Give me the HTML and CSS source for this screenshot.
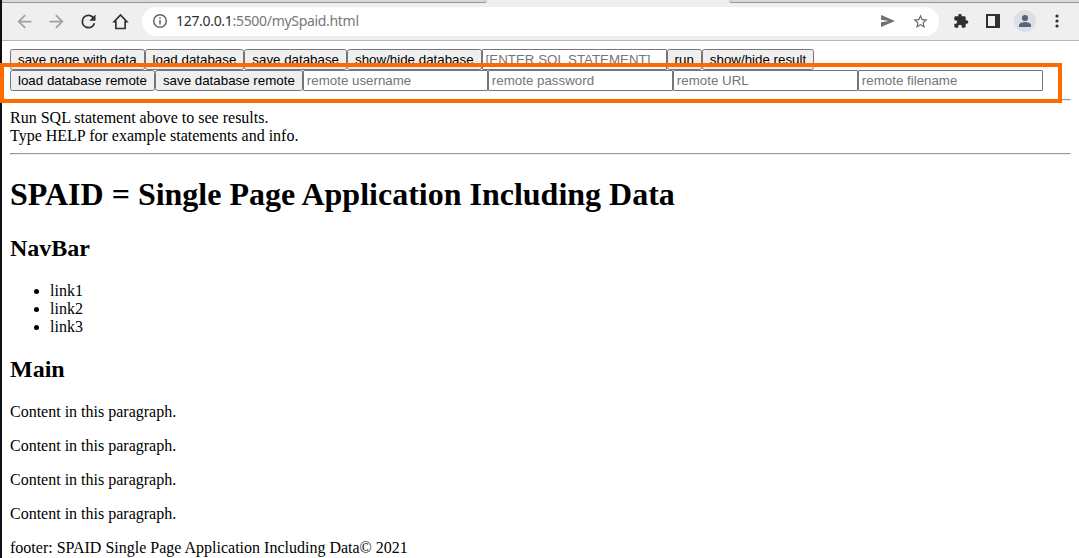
FILE: index.html
```html
<!DOCTYPE html>
<html lang="en">
<head>
<meta charset="utf-8">
<title>mySpaid</title>
<link rel="stylesheet" href="styles.css">
</head>
<body>
<div class="window">
  <div class="tabs"><div class="tab tab-left"></div><div class="tab-active"></div><div class="tab tab-right"></div></div>
  <header class="toolbar">
    <nav class="nav-icons">
      <svg class="icon faded" viewBox="0 0 24 24"><path d="M20 11H7.83l5.59-5.59L12 4l-8 8 8 8 1.41-1.41L7.83 13H20z"/></svg>
      <svg class="icon faded" viewBox="0 0 24 24"><path d="M12 4l-1.41 1.41L16.17 11H4v2h12.17l-5.58 5.59L12 20l8-8z"/></svg>
      <svg class="icon" viewBox="0 0 24 24"><path d="M17.65 6.35A7.96 7.96 0 0 0 12 4a8 8 0 1 0 7.73 10h-2.08A6 6 0 1 1 12 6c1.66 0 3.14.69 4.22 1.78L13 11h7V4z"/></svg>
      <svg class="icon" viewBox="0 0 24 24"><path class="outline" d="M4.7 12.2H6.7V20H17.3V12.2H19.3L12 4.4z"/></svg>
    </nav>
    <div class="address">
      <svg class="info" viewBox="0 0 16 16"><circle cx="8" cy="8" r="6.3"/><path d="M8 7v4.4M8 4.4v1.6"/></svg>
      <span class="url"><b>127.0.0.1</b>:5500/mySpaid.html</span>
      <svg class="send" viewBox="0 0 14 14"><path d="M0 1l14 6-14 6V8.2L8 7 0 5.8z"/></svg>
      <svg class="star" viewBox="0 0 24 24"><path d="M22 9.24l-7.19-.62L12 2 9.19 8.63 2 9.24l5.46 4.73L5.82 21 12 17.27 18.18 21l-1.63-7.03zM12 15.4l-3.76 2.27 1-4.28-3.32-2.88 4.38-.38L12 6.1l1.71 4.04 4.38.38-3.32 2.88 1 4.28z"/></svg>
    </div>
    <div class="actions">
      <svg class="puzzle" viewBox="0 0 24 24"><path d="M20.5 11H19V7c0-1.1-.9-2-2-2h-4V3.5a2.5 2.5 0 0 0-5 0V5H4c-1.1 0-1.99.9-1.99 2v3.8H3.5c1.49 0 2.7 1.21 2.7 2.7s-1.21 2.7-2.7 2.7H2V20c0 1.1.9 2 2 2h3.8v-1.5c0-1.49 1.21-2.7 2.7-2.7s2.7 1.21 2.7 2.7V22H17c1.1 0 2-.9 2-2v-4h1.5a2.5 2.5 0 0 0 0-5z"/></svg>
      <svg class="panel" viewBox="0 0 14 14"><path d="M0 0h14v14H0zM2 2v10h7V2z" fill-rule="evenodd"/></svg>
      <svg class="avatar" viewBox="0 0 22 22"><circle class="avatar-bg" cx="11" cy="11" r="11"/><circle cx="11" cy="8" r="3.1"/><path d="M5 17v-2c0-2 4-3 6-3s6 1 6 3v2z"/></svg>
      <svg class="dots" viewBox="0 0 4 14"><circle cx="2" cy="2" r="1.6"/><circle cx="2" cy="7" r="1.6"/><circle cx="2" cy="12" r="1.6"/></svg>
    </div>
  </header>
  <main class="page">
    <div class="controls"><button>save page with data</button><button>load database</button><button>save database</button><button>show/hide database</button><input placeholder="[ENTER SQL STATEMENT]"><button>run</button><button>show/hide result</button></div>
    <div class="controls"><button>load database remote</button><button>save database remote</button><input placeholder="remote username"><input placeholder="remote password"><input placeholder="remote URL"><input placeholder="remote filename"></div>
    <hr>
    <div>Run SQL statement above to see results.<br>Type HELP for example statements and info.</div>
    <hr>
    <h1>SPAID = Single Page Application Including Data</h1>
    <h2>NavBar</h2>
    <ul><li>link1</li><li>link2</li><li>link3</li></ul>
    <h2>Main</h2>
    <p>Content in this paragraph.</p>
    <p>Content in this paragraph.</p>
    <p>Content in this paragraph.</p>
    <p>Content in this paragraph.</p>
    <footer>footer: SPAID Single Page Application Including Data© 2021</footer>
  </main>
  <div class="highlight"></div>
</div>
</body>
</html>
```
FILE: styles.css
```css
body {
  margin: 0;
  background: #fff;
  color: #000;
  font: 16px/18px "Liberation Serif", serif;
}
.window {
  position: relative;
  box-sizing: border-box;
  height: 558px;
  padding-left: 2px;
  overflow: hidden;
  background: linear-gradient(to right, #101014 2px, #fff 2px);
}
.tabs {
  display: flex;
  height: 3px;
  background: #efefef;
}
.tab {
  box-sizing: border-box;
  background: #d9d9d9;
  border-bottom: 1px solid #969696;
}
.tab-left { width: 485px; border-bottom-right-radius: 4px; }
.tab-active { width: 242px; }
.tab-right { flex: 1; border-bottom-left-radius: 4px; }
.toolbar {
  display: flex;
  align-items: center;
  box-sizing: border-box;
  height: 38px;
  padding-bottom: 1px;
  background: #efefef;
  border-bottom: 1px solid #b6b6b6;
}
.nav-icons {
  display: flex;
  gap: 11px;
  width: 128px;
  padding-left: 12px;
}
.icon { width: 21px; height: 21px; fill: #303030; }
.faded { fill: #a0a0a0; }
.outline { fill: none; stroke: #303030; stroke-width: 1.9; }
.address {
  display: flex;
  align-items: center;
  box-sizing: border-box;
  width: 797px;
  height: 29px;
  padding: 0 10px;
  border-radius: 15px;
  background: #fff;
}
.info {
  width: 16px;
  height: 16px;
  margin-right: 8px;
  fill: none;
  stroke: #5f6368;
  stroke-width: 1.5;
}
.url {
  flex: 1;
  color: #777;
  font: 14px/20px "Noto Sans", sans-serif;
  letter-spacing: -0.31px;
}
.url b { color: #303030; font-weight: 400; }
.send { width: 14px; height: 14px; margin-right: 17px; fill: #707070; }
.star { width: 17px; height: 17px; fill: #666; }
.actions {
  display: flex;
  align-items: center;
  padding-left: 14px;
  fill: #303030;
}
.puzzle { width: 16px; height: 16px; margin-right: 17px; }
.panel { width: 14px; height: 14px; margin-right: 14px; }
.avatar { width: 22px; height: 22px; margin-right: 19px; fill: #59647b; }
.avatar-bg { fill: #dce0e6; }
.dots { width: 4px; height: 14px; }
.page { padding: 8px; }
.controls { display: flex; height: 21px; }
.controls button,
.controls input {
  box-sizing: border-box;
  height: 21px;
  margin: 0;
  border: 1px solid #767676;
  border-radius: 2.5px;
  font: 13.333px "Liberation Sans", sans-serif;
}
.controls button {
  padding: 1px 7px;
  background: #efefef;
  color: #000;
  white-space: nowrap;
}
.controls input { width: 185px; padding: 1px 3px; background: #fff; border-radius: 1px; }
.controls input::placeholder { color: #757575; }
hr {
  margin: 8px 0;
  border: 1px solid;
  border-color: #9a9a9a #eee #eee #9a9a9a;
}
h1 { margin: 21.44px 0; font-size: 32px; line-height: 37px; }
h2 { margin: 19.92px 0; font-size: 24px; line-height: 27px; }
ul { margin: 16px 0; padding-left: 40px; }
p { margin: 16px 0; }
.highlight {
  position: absolute;
  top: 63px;
  left: 0;
  box-sizing: border-box;
  width: 1062px;
  height: 40px;
  border: 4px solid #ff6a00;
}
```
